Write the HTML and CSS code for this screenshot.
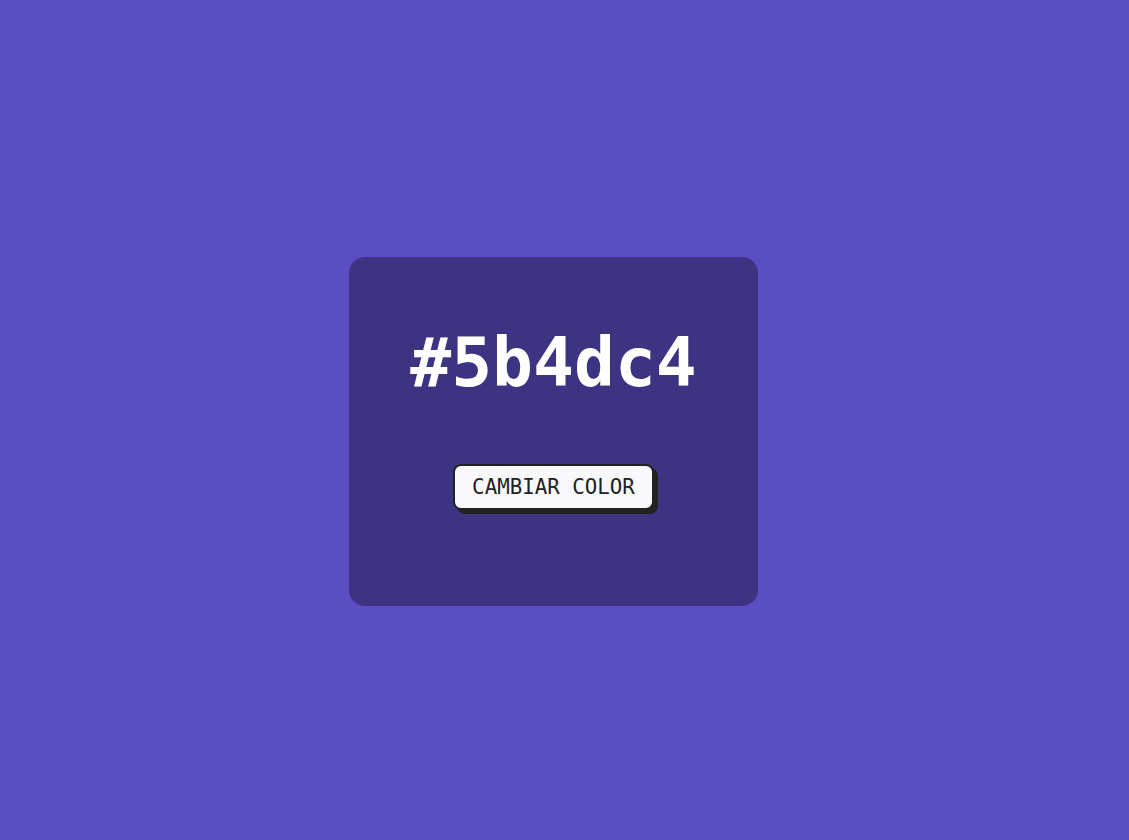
FILE: index.html
```html
<!DOCTYPE html>
<html lang="es">
<head>
<meta charset="utf-8">
<title>Color</title>
<link rel="stylesheet" href="styles.css">
</head>
<body>
<main class="page">
  <section class="card">
    <h1 class="hex">#5b4dc4</h1>
    <button class="btn" type="button">CAMBIAR COLOR</button>
  </section>
</main>
</body>
</html>
```

FILE: styles.css
```css
html, body {
  margin: 0;
  padding: 0;
  height: 100%;
}
body {
  background: #5b4dc4;
  font-family: "DejaVu Sans Mono", monospace;
}
.page {
  box-sizing: border-box;
  min-height: 100%;
  display: flex;
  align-items: flex-start;
  justify-content: flex-start;
  padding: 257px 0 0 349px;
}
.card {
  box-sizing: border-box;
  width: 409px;
  height: 349px;
  background: #3d3383;
  border-radius: 16px;
  display: flex;
  flex-direction: column;
  align-items: center;
  padding-top: 68px;
}
.hex {
  margin: 0;
  color: #ffffff;
  font-size: 68px;
  font-weight: bold;
  line-height: 76px;
}
.btn {
  margin-top: 63px;
  margin-left: 0;
  font-family: "DejaVu Sans Mono", monospace;
  font-size: 20.8px;
  line-height: 22px;
  color: #222222;
  background: #f9f9fb;
  border: 2px solid #222222;
  border-radius: 8px;
  padding: 10px 17px;
  box-shadow: 4px 4px 0 #222222;
  cursor: pointer;
}
```
